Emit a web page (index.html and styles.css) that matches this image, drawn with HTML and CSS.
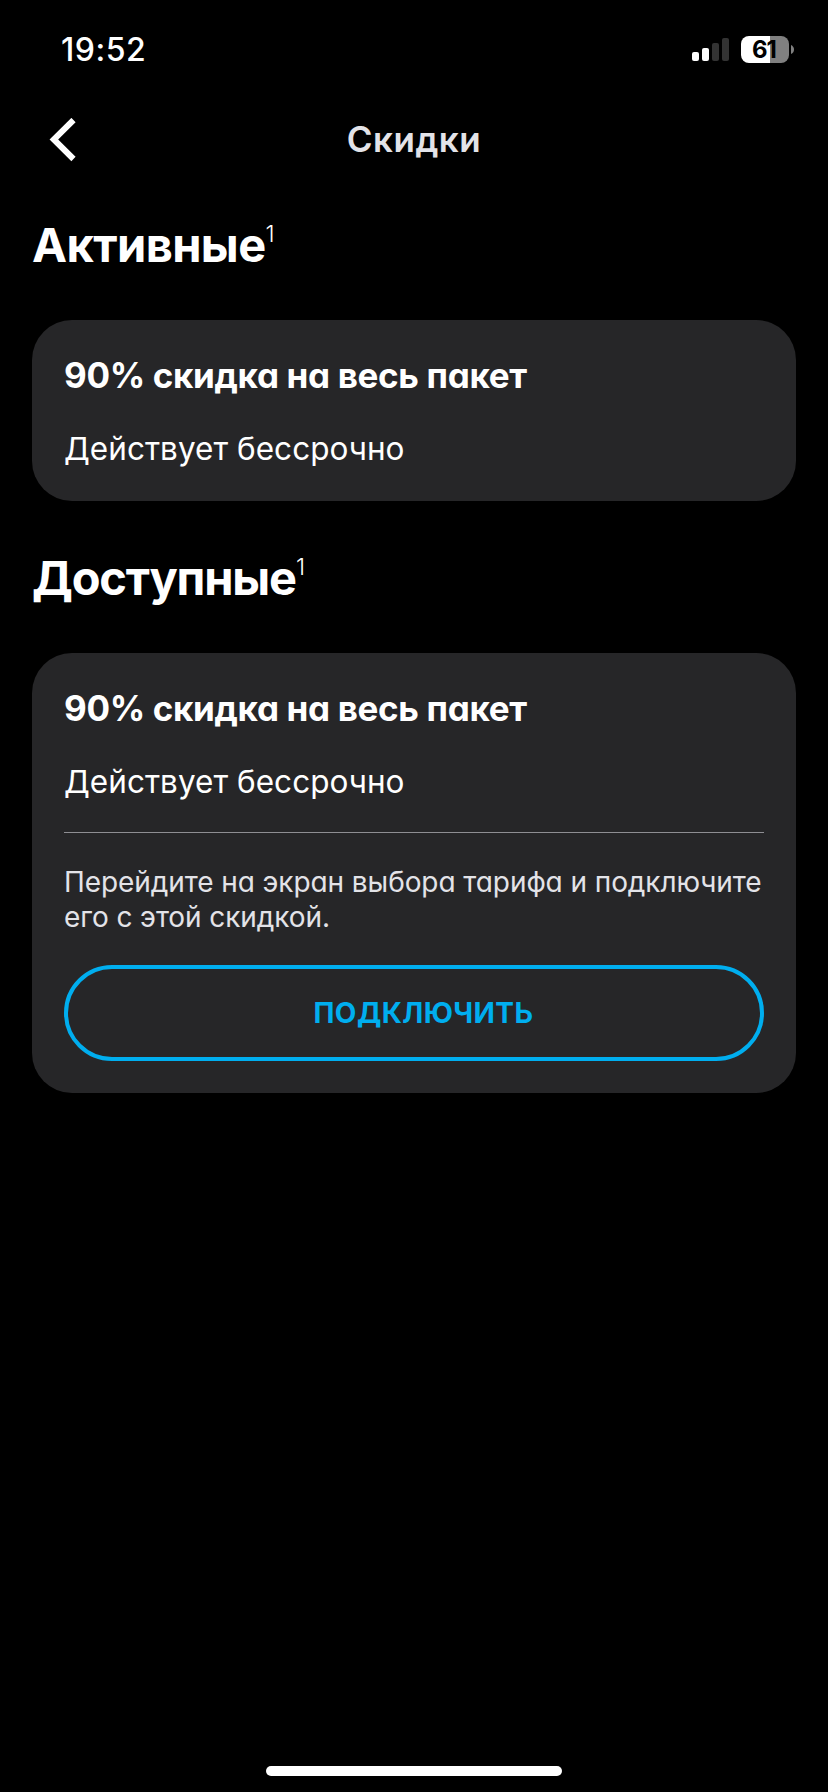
FILE: index.html
```html
<!DOCTYPE html>
<html lang="ru">
<head>
<meta charset="utf-8">
<title>Скидки</title>
<link rel="stylesheet" href="styles.css">
</head>
<body>
<div class="screen">
  <div class="status">
    <span class="time">19:52</span>
    <div class="indicators">
      <svg class="signal" width="38" height="24" viewBox="0 0 38 24"><rect x="0" y="14" width="7" height="9" rx="2" fill="#fff"/><rect x="10" y="10" width="7" height="13" rx="2" fill="#fff"/><rect x="20" y="5" width="7" height="18" rx="2" fill="#333"/><rect x="30" y="0" width="7" height="23" rx="2" fill="#333"/></svg>
      <div class="battery">61</div>
      <svg class="tip" width="3" height="9" viewBox="0 0 3 9"><path d="M0 0Q3 1.5 3 4.5T0 9Z" fill="#808080"/></svg>
    </div>
  </div>
  <header class="nav">
    <svg class="back" width="28" height="44" viewBox="0 0 28 44"><path d="M24.5 2L4.8 21.5L24.5 41" fill="none" stroke="#fff" stroke-width="6"/></svg>
    <h1 class="title">Скидки</h1>
  </header>
  <h2 class="heading">Активные<span class="count">1</span></h2>
  <section class="card">
    <h3 class="name">90% скидка на весь пакет</h3>
    <p class="term">Действует бессрочно</p>
  </section>
  <h2 class="heading available">Доступные<span class="count">1</span></h2>
  <section class="card offer">
    <h3 class="name">90% скидка на весь пакет</h3>
    <p class="term">Действует бессрочно</p>
    <p class="hint">Перейдите на экран выбора тарифа и подключите<br>его с этой скидкой.</p>
    <button class="connect">ПОДКЛЮЧИТЬ</button>
  </section>
  <div class="home"></div>
</div>
</body>
</html>
```
FILE: styles.css
```css
* { box-sizing: border-box; }
body { margin: 0; background: #000; color: #fff; font-family: Inter, "Open Sans", sans-serif; font-feature-settings: "cv11" 1; }
h1, h2, h3, p { margin: 0; }
.screen { height: 1792px; display: flex; flex-direction: column; padding: 0 32px; }
.status { height: 100px; display: flex; justify-content: space-between; align-items: center; padding: 0 2px 0 29px; flex: none; }
.time { font-size: 32px; font-weight: 500; line-height: 40px; letter-spacing: 0.5px; }
.indicators { display: flex; align-items: center; padding-bottom: 1px; }
.signal { margin-right: 11px; }
.battery { width: 48px; height: 27px; border-radius: 8px; background: linear-gradient(90deg, #fff 29px, #808080 29px); color: #000; font-size: 24px; font-weight: 700; line-height: 27px; text-align: center; letter-spacing: -1px; padding-right: 2px; }
.tip { margin: 0 0 0 2px; }
.nav { height: 80px; display: grid; grid-template-columns: 100px 1fr 100px; align-items: center; flex: none; }
.back { margin-left: 17px; }
.title { font-size: 35px; font-weight: 600; line-height: 44px; text-align: center; color: #e3e3e8; letter-spacing: 0.5px; padding-bottom: 2px; }
.heading { height: 60px; margin: 35px 0 45px; display: flex; align-items: flex-start; flex: none; font-size: 47px; font-weight: 700; line-height: 60px; letter-spacing: -0.6px; }
.available { margin: 47px 0 45px; letter-spacing: -1.15px; }
.count { font-size: 23px; font-weight: 300; line-height: 28px; letter-spacing: 0; margin: 5px 0 0; }
.card { background: #262628; border-radius: 40px; padding: 32px; height: 181px; flex: none; }
.name { font-size: 35px; font-weight: 700; line-height: 47px; letter-spacing: -0.34px; white-space: nowrap; }
.term { font-size: 31.5px; line-height: 40px; letter-spacing: 0.03px; margin-top: 30px; }
.offer { height: 440px; }
.hint { border-top: 1px solid #8e8e93; font-size: 28px; line-height: 35px; color: #e3e3e8; letter-spacing: -0.08px; margin-top: 30px; padding-top: 32px; white-space: nowrap; }
.connect { display: block; width: 100%; height: 96px; margin-top: 30px; padding: 0 0 0 19px; border: 4px solid #00aeef; border-radius: 48px; background: transparent; color: #00aeef; font: 700 28px Inter, sans-serif; letter-spacing: 0.45px; }
.home { width: 296px; height: 10px; border-radius: 5px; background: #fff; margin: auto auto 16px; }
```
